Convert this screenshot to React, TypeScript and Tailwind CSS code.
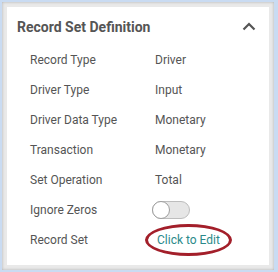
import React from "react";

const rows: { label: string; value?: string }[] = [
  { label: "Record Type", value: "Driver" },
  { label: "Driver Type", value: "Input" },
  { label: "Driver Data Type", value: "Monetary" },
  { label: "Transaction", value: "Monetary" },
  { label: "Set Operation", value: "Total" },
];

function Toggle() {
  return (
    <div className="relative h-[18px] w-[38px] rounded-full border border-[#bdbdbd] bg-[#e6e6e6]">
      <div className="absolute left-[-1px] top-[-1px] h-[18px] w-[18px] rounded-full border border-[#9e9e9e] bg-white" />
    </div>
  );
}

export default function App() {
  return (
    <div className="h-[272px] w-[278px] bg-[#c9dbf2] pb-[2px] pl-[2px] pr-[4px] pt-[2px] font-['Roboto',sans-serif]">
      <div className="h-full w-full bg-[#e9e9e9] p-[5px] shadow-[inset_0_0_3px_rgba(0,0,0,0.25)]">
        <div className="flex h-full flex-col bg-white pl-[10px] pr-[12px]">
          <div className="flex h-[38px] items-center justify-between pt-[2px]">
            <h2 className="text-[14px] font-bold text-[#555]">Record Set Definition</h2>
            <svg width="14" height="10" viewBox="0 0 14 10" className="mr-[1px]">
              <path d="M1.5 7.5 L7 2 L12.5 7.5" fill="none" stroke="#555" strokeWidth="2.2" />
            </svg>
          </div>
          <div className="flex flex-col pl-[13px] text-[12px] text-[#555]">
            {rows.map((r) => (
              <div key={r.label} className="flex h-[30px] items-center">
                <span className="w-[125px]">{r.label}</span>
                <span>{r.value}</span>
              </div>
            ))}
            <div className="flex h-[30px] items-center">
              <span className="w-[122px]">Ignore Zeros</span>
              <Toggle />
            </div>
            <div className="flex h-[30px] items-center">
              <span className="w-[115px]">Record Set</span>
              <span className="rounded-[50%] border-[3px] border-[#a31f2a] px-[9px] py-[6px] leading-[14px] text-[#2b8a8a]">
                Click to Edit
              </span>
            </div>
          </div>
        </div>
      </div>
    </div>
  );
}
